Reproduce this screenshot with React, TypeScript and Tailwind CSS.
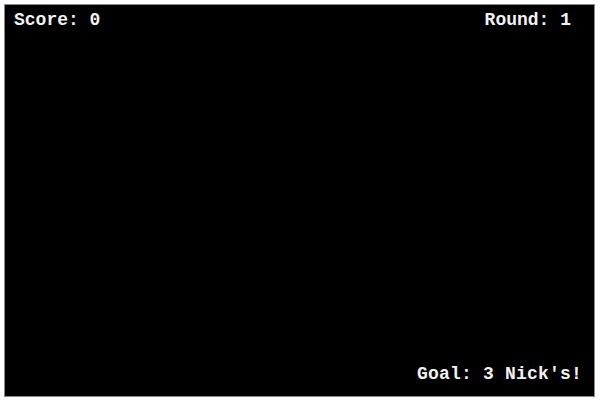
export default function App() {
  return (
    <div className="w-[600px] h-[403px] bg-white p-[4px] pb-[6px] pr-[5px]">
      <div
        className="h-full w-full bg-black border border-[#8a8a8a] flex flex-col justify-between pl-[9px] pr-[12px] pt-[4px] pb-[11px] text-[#f2f2f2] font-bold text-[18px] leading-[22px]"
        style={{ fontFamily: '"Liberation Mono", "Courier New", monospace' }}
      >
        <div className="flex justify-between">
          <span>Score: 0</span>
          <span className="mr-[11px]">Round: 1</span>
        </div>
        <div className="flex justify-end">
          <span className="tracking-[0.2px]">Goal: 3 Nick's!</span>
        </div>
      </div>
    </div>
  );
}
